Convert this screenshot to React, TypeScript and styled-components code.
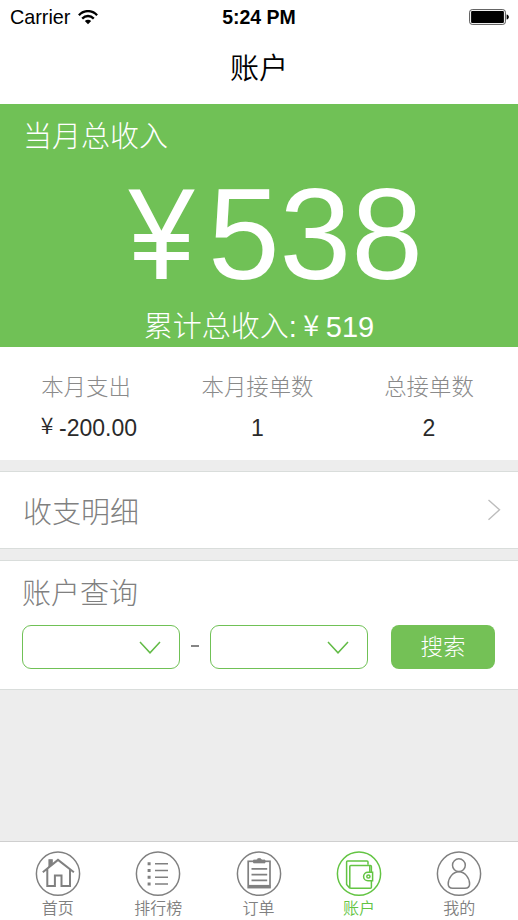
import React from 'react';
import styled, { createGlobalStyle } from 'styled-components';

const GREEN = '#70c156';

const GlobalStyle = createGlobalStyle`
  * { box-sizing: border-box; }
  body {
    margin: 0;
    background: #ededed;
    font-family: "Liberation Sans", "Noto Sans CJK SC", sans-serif;
    font-weight: 300;
  }
  button { font: inherit; padding: 0; margin: 0; border: 0; background: none; }
`;

const Screen = styled.div`
  width: 518px;
  height: 920px;
  display: flex;
  flex-direction: column;
  background: #ededed;
  overflow: hidden;
  white-space: nowrap;
`;

const StatusBar = styled.div`
  height: 34px;
  flex: none;
  display: grid;
  grid-template-columns: 1fr auto 1fr;
  align-items: center;
  padding: 0 9px;
  background: #fff;
  color: #000;
  font-size: 19.8px;
  line-height: 34px;
`;

const Carrier = styled.div`
  display: flex;
  align-items: center;
  gap: 8px;
  padding-left: 1px;
`;

const Clock = styled.div`
  font-weight: 700;
  font-size: 19.5px;
`;

const BatterySlot = styled.div`
  display: flex;
  justify-content: flex-end;
`;

const TitleBar = styled.header`
  height: 70px;
  flex: none;
  background: #fff;
  color: #000;
  text-align: center;
  font-size: 29px;
  font-weight: 350;
  line-height: 70px;
`;

const Income = styled.section`
  height: 243px;
  flex: none;
  background: ${GREEN};
  color: #fff;
  display: flex;
  flex-direction: column;
`;

const IncomeLabel = styled.div`
  padding: 0 23px;
  height: 64px;
  font-size: 29px;
  line-height: 66px;
`;

const IncomeAmount = styled.div`
  display: flex;
  justify-content: center;
  height: 134px;
  font-size: 129px;
  line-height: 132px;
`;

const BigYen = styled.span`
  width: 113px;
  padding-left: 22px;
  text-align: center;
  transform: scaleX(0.92);
`;

const IncomeTotal = styled.div`
  display: flex;
  justify-content: center;
  height: 45px;
  font-size: 29px;
  line-height: 50px;
`;

const Yen = styled.span<{ $width: number }>`
  width: ${(p) => p.$width}px;
  margin-top: -4px;
  text-align: center;
  font-family: "Noto Sans CJK SC", sans-serif;
  font-weight: 350;
`;

const Stats = styled.section`
  height: 113px;
  flex: none;
  display: grid;
  grid-template-columns: 172px 171px 172px;
  padding-top: 20px;
  background: #fff;
  text-align: center;
`;

const StatLabel = styled.div`
  height: 41px;
  color: #8a8a8a;
  font-size: 22.4px;
  line-height: 42px;
`;

const StatValue = styled.div`
  display: flex;
  justify-content: center;
  height: 40px;
  color: #2a2a2a;
  font-size: 23px;
  line-height: 40px;
`;

const Panel = styled.section<{ $height: number }>`
  height: ${(p) => p.$height}px;
  flex: none;
  margin-top: 11px;
  background: #fff;
  border-top: 1px solid #d9dddb;
  border-bottom: 1px solid #d9dddb;
`;

const LinkRow = styled.div`
  display: flex;
  align-items: center;
  justify-content: space-between;
  height: 75px;
  padding: 0 17px 0 23px;
  color: #808080;
  font-size: 29px;
`;

const QueryTitle = styled.div`
  height: 64px;
  padding: 0 22px;
  color: #808080;
  font-size: 29px;
  line-height: 67px;
`;

const QueryForm = styled.div`
  display: flex;
  align-items: center;
  padding: 0 22px;
`;

const Select = styled.button`
  width: 158px;
  height: 44px;
  display: flex;
  align-items: center;
  justify-content: flex-end;
  padding-right: 18px;
  border: 1px solid ${GREEN};
  border-radius: 9px;
`;

const Dash = styled.span`
  width: 30px;
  display: flex;
  justify-content: center;
  &::before {
    content: '';
    width: 8px;
    height: 2px;
    margin-top: -2px;
    background: #858585;
  }
`;

const SearchButton = styled.button`
  width: 104px;
  height: 44px;
  margin-left: 23px;
  border-radius: 8px;
  background: #74c156;
  color: #fff;
  font-size: 22.5px;
  line-height: 46px;
`;

const TabBar = styled.nav`
  display: grid;
  grid-template-columns: repeat(5, 100.4px);
  padding-left: 7.6px;
  height: 79px;
  flex: none;
  margin-top: auto;
  border-top: 1px solid #cfcfcf;
  background: #fff;
`;

const Tab = styled.div<{ $active?: boolean }>`
  display: flex;
  flex-direction: column;
  align-items: center;
  padding-top: 9px;
  color: ${(p) => (p.$active ? '#63c443' : '#808080')};
  font-size: 16px;
  font-weight: 350;
  line-height: 22px;
  svg { display: block; margin-bottom: 1px; }
`;

const WifiIcon = () => (
  <svg width="20" height="15" viewBox="0 0 20 15" fill="none" stroke="#000" strokeWidth="2.3">
    <path d="M0.9 5.2C6-0.3 14-0.3 19.1 5.2" />
    <path d="M4.2 8.6c3.4-3.5 8.2-3.5 11.6 0" />
    <path d="M10 14.2 6.8 11.1c1.8-1.8 4.6-1.8 6.4 0Z" fill="#000" stroke="none" />
  </svg>
);

const BatteryIcon = () => (
  <svg width="40" height="16" viewBox="0 0 40 16">
    <rect x="0.6" y="0.6" width="35.8" height="14.8" rx="2.6" fill="none" stroke="#555" strokeWidth="1" />
    <rect x="2.1" y="2.1" width="32.8" height="11.8" rx="1" fill="#000" />
    <path d="M37.6 5.5c3 .6 3 4.4 0 5Z" fill="#000" />
  </svg>
);

const ChevronRight = () => (
  <svg width="14" height="22" viewBox="0 0 14 22" fill="none" stroke="#bdbdbd" strokeWidth="1.4">
    <path d="M1.5 1 12.5 10.8 1.5 20.7" />
  </svg>
);

const ChevronDown = () => (
  <svg width="22" height="14" viewBox="0 0 22 14" fill="none" stroke="#62bb46" strokeWidth="1.5">
    <path d="M1 2 11 12.8 21 2" />
  </svg>
);

const TabIcon = ({ children }: { children: React.ReactNode }) => (
  <svg width="46" height="46" viewBox="0 0 46 46" fill="none" stroke="currentColor" strokeWidth="1.5">
    <circle cx="23" cy="22.7" r="21.6" />
    {children}
  </svg>
);

const tabs = [
  {
    label: '首页',
    icon: (
      <>
        <path strokeWidth="2" d="M7.8 21.2 23 8.9 38.9 21.2M12.3 18v17h7.6V24.5h6.6V35h8.5V18" />
        <path strokeWidth="1.2" fill="currentColor" d="M14 15.6V8.8h3.2v4.3Z" />
      </>
    ),
  },
  {
    label: '排行榜',
    icon: (
      <>
        <path d="M20 12.8h13M20 19.4h13M20 26.2h13M20 33h13" />
        <path strokeWidth="3" d="M12.6 12.8h3M12.6 19.4h3M12.6 26.2h3M12.6 33h3" />
      </>
    ),
  },
  {
    label: '订单',
    icon: (
      <>
        <rect x="12.2" y="10.3" width="21.8" height="26.3" strokeWidth="1.7" />
        <path strokeWidth="3" d="M12 35.4h22.3" />
        <path fill="currentColor" strokeWidth="0.8" d="M17.5 11.9V9h3.2c.7-2.1 4.4-2.1 5 0h3.3v2.9Z" />
        <path strokeWidth="1.7" d="M15.5 17.8h15.7M15.5 23.6h15.7M15.5 29.3h15.7" />
      </>
    ),
  },
  {
    label: '账户',
    active: true,
    icon: (
      <>
        <path d="M32 13.8V11q0-1-1-1H11.6q-1 0-1 1v22.4l3.2 3.8" />
        <path d="M35.4 21.2v-5.6q0-1-1-1H14.8q-1 0-1 1v20.6q0 1 1 1h19.6q1 0 1-1v-6.4" />
        <path d="M33.8 20.8v-6M36.6 21.2h-4.7a4.3 4.3 0 0 0 0 8.6h4.7Z" />
        <circle cx="32.4" cy="25.5" r="1.6" />
      </>
    ),
  },
  {
    label: '我的',
    icon: (
      <>
        <circle cx="22.9" cy="14.2" r="6.4" />
        <path d="M22.9 20.8c-6 0-10.7 6.1-10.7 12.2 0 3.3 1.6 4.2 4.6 4.2h12.2c3 0 4.6-.9 4.6-4.2 0-6.1-4.7-12.2-10.7-12.2Z" />
      </>
    ),
  },
];

export default function App() {
  return (
    <>
      <GlobalStyle />
      <Screen>
        <StatusBar>
          <Carrier>
            Carrier
            <WifiIcon />
          </Carrier>
          <Clock>5:24 PM</Clock>
          <BatterySlot>
            <BatteryIcon />
          </BatterySlot>
        </StatusBar>
        <TitleBar>账户</TitleBar>
        <Income>
          <IncomeLabel>当月总收入</IncomeLabel>
          <IncomeAmount>
            <BigYen>¥</BigYen>538
          </IncomeAmount>
          <IncomeTotal>
            累计总收入:<Yen $width={29}>¥</Yen>519
          </IncomeTotal>
        </Income>
        <Stats>
          <div>
            <StatLabel>本月支出</StatLabel>
            <StatValue>
              <Yen $width={24}>¥</Yen>-200.00
            </StatValue>
          </div>
          <div>
            <StatLabel>本月接单数</StatLabel>
            <StatValue>1</StatValue>
          </div>
          <div>
            <StatLabel>总接单数</StatLabel>
            <StatValue>2</StatValue>
          </div>
        </Stats>
        <Panel $height={78}>
          <LinkRow>
            收支明细
            <ChevronRight />
          </LinkRow>
        </Panel>
        <Panel $height={130}>
          <QueryTitle>账户查询</QueryTitle>
          <QueryForm>
            <Select>
              <ChevronDown />
            </Select>
            <Dash />
            <Select>
              <ChevronDown />
            </Select>
            <SearchButton>搜索</SearchButton>
          </QueryForm>
        </Panel>
        <TabBar>
          {tabs.map((t) => (
            <Tab key={t.label} $active={t.active}>
              <TabIcon>{t.icon}</TabIcon>
              {t.label}
            </Tab>
          ))}
        </TabBar>
      </Screen>
    </>
  );
}
